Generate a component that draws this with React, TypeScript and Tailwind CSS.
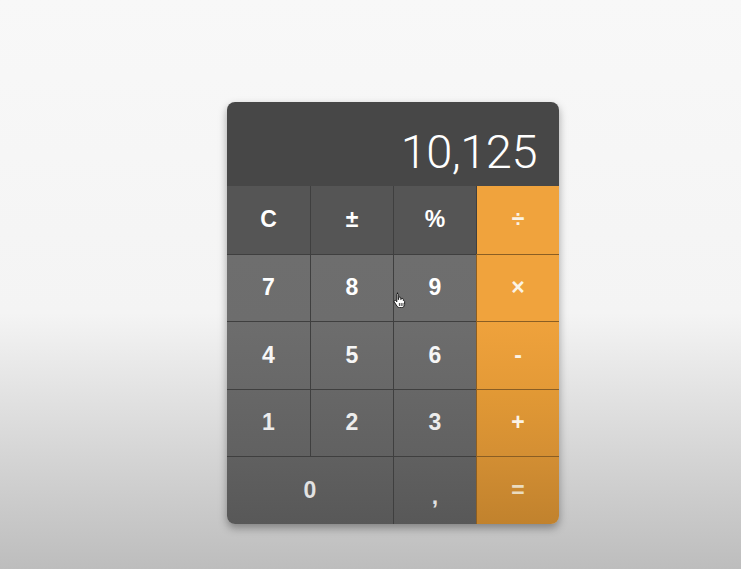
import React from 'react';

type Key = { label: string; kind: 'fn' | 'num' | 'op'; span?: number };

const rows: Key[][] = [
  [
    { label: 'C', kind: 'fn' },
    { label: '±', kind: 'fn' },
    { label: '%', kind: 'fn' },
    { label: '÷', kind: 'op' },
  ],
  [
    { label: '7', kind: 'num' },
    { label: '8', kind: 'num' },
    { label: '9', kind: 'num' },
    { label: '×', kind: 'op' },
  ],
  [
    { label: '4', kind: 'num' },
    { label: '5', kind: 'num' },
    { label: '6', kind: 'num' },
    { label: '-', kind: 'op' },
  ],
  [
    { label: '1', kind: 'num' },
    { label: '2', kind: 'num' },
    { label: '3', kind: 'num' },
    { label: '+', kind: 'op' },
  ],
  [
    { label: '0', kind: 'num', span: 2 },
    { label: ',', kind: 'num' },
    { label: '=', kind: 'op' },
  ],
];

// per-row shading, the lower part of the screen gets darker
const greyBg = [
  'bg-[#555555]',
  'bg-gradient-to-b from-[#6e6e6e] to-[#6d6d6d]',
  'bg-gradient-to-b from-[#6d6d6d] to-[#686868]',
  'bg-gradient-to-b from-[#676767] to-[#616161]',
  'bg-gradient-to-b from-[#606060] to-[#585858]',
];
const orangeBg = [
  'bg-[#f0a33d]',
  'bg-[#f0a33d]',
  'bg-gradient-to-b from-[#efa23c] to-[#e49a37]',
  'bg-gradient-to-b from-[#e29935] to-[#d48f33]',
  'bg-gradient-to-b from-[#d28e33] to-[#c1822d]',
];
const textCol = ['text-white', 'text-white', 'text-[#f6f6f6]', 'text-[#ececec]', 'text-[#e2e2e2]'];

const CalcKey: React.FC<{ k: Key; row: number; col: number }> = ({ k, row, col }) => {
  const isOp = k.kind === 'op';
  const bg = isOp ? orangeBg[row] : greyBg[row];
  const borderTop = row === 0 ? '' : isOp ? 'border-t border-[#8a5e24]' : 'border-t border-[#3f3f3f]';
  const borderLeft = col === 0 ? '' : 'border-l border-[#3f3f3f]';
  const color = isOp ? (row === 4 ? 'text-[#eadcc0]' : 'text-[#fbf3e6]') : textCol[row];
  return (
    <button
      className={`${bg} ${borderTop} ${borderLeft} ${color} ${k.span === 2 ? 'col-span-2' : ''} flex items-center justify-center text-[23px] font-bold leading-none`}
    >
      <span className={k.label === ',' ? 'translate-y-[6px]' : ''}>{k.label}</span>
    </button>
  );
};

const HandCursor = () => (
  <svg width="14" height="16" viewBox="0 0 14 16" className="absolute left-[393px] top-[292px]">
    <path
      d="M4 1.2c.7 0 1.2.5 1.2 1.2v5.2l.4-.1V6c0-.6.5-1 1.1-1s1.1.4 1.1 1v1.5l.3-.1c0-.6.5-1 1.1-1s1.1.4 1.1 1v1.2l.3-.1c.5 0 1 .4 1 1v3.1c0 1.6-1.3 3-3 3H6.5c-1 0-1.8-.5-2.4-1.3L1.3 10c-.4-.5-.3-1.2.2-1.5.5-.3 1.1-.2 1.4.2l.9 1.1V2.4c0-.7.5-1.2 1.2-1.2z"
      fill="#fff"
      stroke="#111"
      strokeWidth="0.9"
    />
    <path d="M6.4 11v3M8.2 11v3M10 11v3" stroke="#111" strokeWidth="0.8" />
  </svg>
);

export default function App() {
  return (
    <div
      className="relative w-[741px] h-[569px] overflow-hidden bg-gradient-to-b from-[#f8f8f8] via-[#f4f4f4] via-55% to-[#bdbdbd] pt-[102px] pl-[227px]"
      style={{ fontFamily: '"Liberation Sans", Arial, sans-serif' }}
    >
      <div className="w-[332px] rounded-lg overflow-hidden shadow-[0_4px_8px_rgba(0,0,0,0.35)] flex flex-col">
        <div className="h-[84px] bg-[#474747] flex items-end justify-end pr-[22px] pb-[11px]">
          <span
            className="text-white text-[47px] leading-none font-light tracking-[-0.5px]"
            style={{ fontFamily: 'Roboto, "Liberation Sans", sans-serif' }}
          >
            10,125
          </span>
        </div>
        <div className="grid grid-cols-4 grid-rows-[repeat(5,67.5px)]">
          {rows.map((r, ri) => {
            let col = 0;
            return r.map((k) => {
              const el = <CalcKey key={`${ri}-${k.label}`} k={k} row={ri} col={col} />;
              col += k.span ?? 1;
              return el;
            });
          })}
        </div>
      </div>
      <HandCursor />
    </div>
  );
}
